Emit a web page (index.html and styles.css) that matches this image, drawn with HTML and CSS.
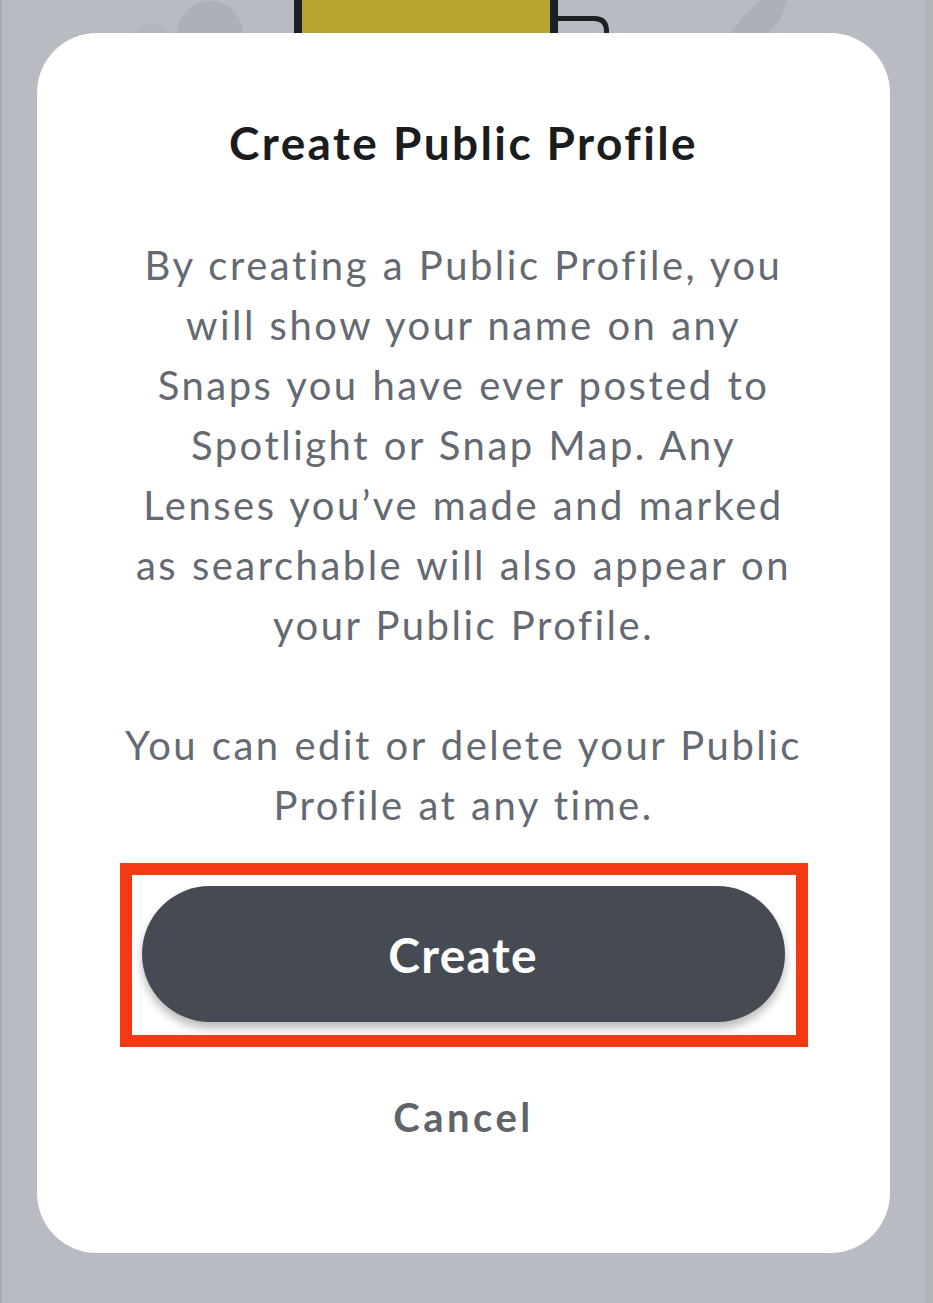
FILE: index.html
```html
<!doctype html>
<html lang="en">
<head>
<meta charset="utf-8">
<meta name="viewport" content="width=device-width, initial-scale=1">
<title>Create Public Profile</title>
<link rel="stylesheet" href="styles.css">
</head>

<body>
	<div class="pp-fundo">
		<svg class="pp-cena" width="933" height="80" viewBox="0 0 933 80" aria-hidden="true">
			<circle cx="208" cy="34" r="33" fill="#adb0b6"/>
			<circle cx="150" cy="44" r="20" fill="#b1b4ba"/>
			<path d="M722 40 L745 12 L760 0 L785 0 L778 20 L760 40 Z" fill="#adb0b6"/>
			<rect x="296" y="-10" width="256" height="60" fill="#b7a532" stroke="#1b2025" stroke-width="8"/>
			<path d="M556 18.5 H592 Q604.5 18.5 604.5 31 V50" fill="none" stroke="#1b2025" stroke-width="5"/>
		</svg>

		<div class="pp-caixa">
			<h1 class="pp-titulo">Create Public Profile</h1>
			<p class="pp-texto">By creating a Public Profile, you<br>will show your name on any<br>Snaps you have ever posted to<br>Spotlight or Snap Map. Any<br>Lenses you’ve made and marked<br>as searchable will also appear on<br>your Public Profile.</p>
			<p class="pp-texto pp-texto-fim">You can edit or delete your Public<br>Profile at any time.</p>
			<div class="pp-destaque">
				<button class="pp-botao">Create</button>
			</div>
			<button class="pp-cancelar">Cancel</button>
		</div>
	</div>
</body>
</html>
```

FILE: styles.css
```css
*
{
	margin: 0;
	padding: 0;
	box-sizing: border-box;
}
body
{
	font-family: Lato, "Open Sans", Arial, sans-serif;
	font-variant-ligatures: none;
	background-color: #b8bbc1;
}
.pp-fundo
{
	position: relative;
	width: 933px;
	height: 1303px;
	overflow: hidden;
	border-left: 2px solid #a8abb1;
	border-right: 8px solid #b1b4b9;
	padding-top: 33px;
	padding-left: 35px;
}
.pp-cena
{
	position: absolute;
	top: 0;
	left: 0;
}
.pp-caixa
{
	position: relative;
	width: 853px;
	height: 1220px;
	background-color: #FFF;
	border-radius: 60px;
	padding-top: 84px;
	display: flex;
	flex-direction: column;
	align-items: center;
}
.pp-titulo
{
	font-size: 46px;
	line-height: 52px;
	font-weight: 700;
	letter-spacing: 2.4px;
	color: #1b1c1e;
}
.pp-texto
{
	margin-top: 66px;
	font-size: 40px;
	line-height: 60px;
	letter-spacing: 2.5px;
	word-spacing: 1px;
	color: #656971;
	text-align: center;
	white-space: nowrap;
}
.pp-texto-fim
{
	margin-top: 60px;
}
.pp-destaque
{
	margin-top: 28px;
	width: 688px;
	height: 184px;
	border: 12px solid #f33a14;
	padding: 11px 11px 13px 10px;
}
.pp-botao
{
	display: block;
	width: 643px;
	height: 136px;
	border: none;
	border-radius: 68px;
	background-color: #454a53;
	color: #FFF;
	font-family: inherit;
	font-size: 48px;
	font-weight: 700;
	letter-spacing: 1.3px;
	box-shadow: 0 6px 10px rgba(0, 0, 0, 0.28);
}
.pp-cancelar
{
	margin-top: 46px;
	border: none;
	background: none;
	font-family: inherit;
	font-size: 40px;
	line-height: 48px;
	font-weight: 700;
	letter-spacing: 3.5px;
	color: #5f636a;
}
```
